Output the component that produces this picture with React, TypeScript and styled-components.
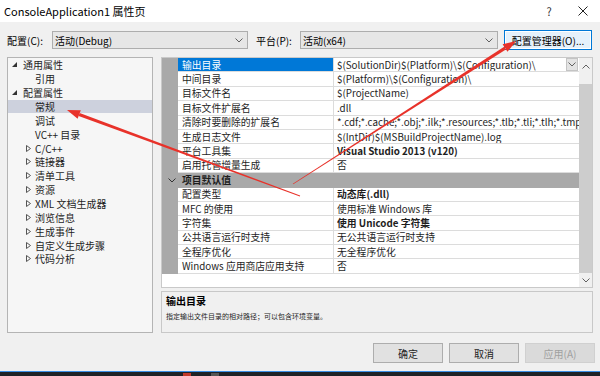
import React from 'react'
import styled, { createGlobalStyle } from 'styled-components'

const GlobalStyle = createGlobalStyle`
  html, body {
    margin: 0;
    padding: 0;
  }
  body {
    font-family: "Noto Sans CJK SC", "Noto Sans", sans-serif;
    color: #000;
  }
`

const Window = styled.div`
  position: relative;
  width: 600px;
  height: 376px;
  background: #f0f0f0;
  display: flex;
  flex-direction: column;
  overflow: hidden;
`

const TitleBar = styled.div`
  height: 22px;
  background: #fff;
  display: flex;
  align-items: center;
  padding-left: 4px;
  font-size: 11px;
`

const TitleText = styled.div`
  flex: 1;
`

const TitleButton = styled.div`
  width: 34px;
  display: flex;
  align-items: center;
  justify-content: center;
  font-size: 11px;
  color: #333;
`

const Body = styled.div`
  padding: 0 7px;
  display: flex;
  flex-direction: column;
`

const ConfigRow = styled.div`
  margin-top: 8px;
  height: 20px;
  display: flex;
  align-items: center;
  font-size: 10px;
`

const Label = styled.div<{ $w: number; $ml?: number }>`
  width: ${(p) => p.$w}px;
  margin-left: ${(p) => p.$ml || 0}px;
`

const Select = styled.div<{ $w: number }>`
  box-sizing: border-box;
  width: ${(p) => p.$w}px;
  height: 18px;
  background: #e6e6e6;
  border: 1px solid #adadad;
  display: flex;
  align-items: center;
  justify-content: space-between;
  padding: 0 4px 0 2px;
`

const ManagerButton = styled.div`
  box-sizing: border-box;
  margin-left: 6px;
  width: 88px;
  height: 20px;
  background: #e5f1fb;
  border: 1px solid #0078d7;
  box-shadow: inset 0 0 0 1px #fff;
  display: flex;
  align-items: center;
  justify-content: center;
`

const Main = styled.div`
  margin-top: 7px;
  height: 276px;
  display: flex;
`

const Tree = styled.div`
  box-sizing: border-box;
  width: 146px;
  background: #f6f6f6;
  border: 1px solid #b4b4b4;
  font-size: 10px;
  color: #1e1e1e;
`

const TreeItem = styled.div<{ $level: number; $selected?: boolean }>`
  height: 13.87px;
  display: flex;
  align-items: center;
  padding-left: ${(p) => (p.$level === 0 ? 4 : 18)}px;
  background: ${(p) => (p.$selected ? '#cdd1dd' : 'transparent')};
  white-space: nowrap;
`

const Expander = styled.div<{ $level: number }>`
  width: ${(p) => (p.$level === 0 ? 11 : 9)}px;
  display: flex;
  align-items: center;
`

const RightCol = styled.div`
  margin-left: 8px;
  width: 432px;
  display: flex;
  flex-direction: column;
`

const Grid = styled.div`
  box-sizing: border-box;
  height: 231px;
  background: #fff;
  border: 1px solid #c9c9c9;
  display: flex;
  font-size: 9.8px;
`

const Rows = styled.div`
  flex: 1;
  display: flex;
  flex-direction: column;
  overflow: hidden;
`

const Row = styled.div`
  height: 14.4px;
  display: flex;
  flex-shrink: 0;
`

const MarginCell = styled.div`
  width: 16px;
  background: #a9a9a9;
  flex-shrink: 0;
`

const NameCell = styled.div<{ $selected?: boolean }>`
  box-sizing: border-box;
  width: 156px;
  padding-left: 4px;
  display: flex;
  align-items: center;
  background: ${(p) => (p.$selected ? '#0078d7' : '#fff')};
  color: ${(p) => (p.$selected ? '#fff' : '#1e1e1e')};
  border-right: 1px solid #dcdcdc;
  border-bottom: 1px solid #dcdcdc;
  white-space: nowrap;
`

const ValueCell = styled.div<{ $bold?: boolean }>`
  box-sizing: border-box;
  flex: 1;
  min-width: 0;
  padding-left: 3px;
  display: flex;
  align-items: center;
  border-bottom: 1px solid #dcdcdc;
  font-weight: ${(p) => (p.$bold ? 700 : 400)};
  color: #1e1e1e;
  white-space: nowrap;
  overflow: hidden;
`

const ValueText = styled.span`
  flex: 1;
  overflow: hidden;
`

const DropButton = styled.div`
  box-sizing: border-box;
  width: 12px;
  height: 13px;
  margin-right: 1px;
  background: #e3e3e3;
  border: 1px solid #c4c4c4;
  display: flex;
  align-items: center;
  justify-content: center;
  flex-shrink: 0;
`

const SectionRow = styled.div`
  height: 14.4px;
  display: flex;
  align-items: center;
  background: #a9a9a9;
  font-weight: 700;
  color: #1e1e1e;
  flex-shrink: 0;
`

const SectionToggle = styled.div`
  width: 20px;
  display: flex;
  justify-content: center;
`

const Scrollbar = styled.div`
  width: 13px;
  background: #f0f0f0;
  display: flex;
  flex-direction: column;
`

const ScrollArrow = styled.div<{ $h: number }>`
  height: ${(p) => p.$h}px;
  display: flex;
  align-items: center;
  justify-content: center;
`

const ScrollGap = styled.div`
  height: 9px;
`

const Thumb = styled.div`
  flex: 1;
  background: #cdcdcd;
`

const Description = styled.div`
  box-sizing: border-box;
  margin-top: 3px;
  height: 42px;
  border: 1px solid #c8c8c8;
  padding: 2px 4px;
`

const DescTitle = styled.div`
  font-size: 10px;
  font-weight: 700;
  line-height: 14px;
`

const DescText = styled.div`
  font-size: 7px;
  line-height: 16px;
  color: #1e1e1e;
`

const ButtonRow = styled.div`
  margin-top: 10px;
  height: 20px;
  display: flex;
  justify-content: flex-end;
  gap: 6px;
  padding-right: 5px;
  margin-right: -7px;
`

const DialogButton = styled.div<{ $disabled?: boolean }>`
  box-sizing: border-box;
  width: 70px;
  height: 20px;
  background: ${(p) => (p.$disabled ? '#dadada' : '#e1e1e1')};
  border: 1px solid ${(p) => (p.$disabled ? '#d0d0d0' : '#adadad')};
  color: ${(p) => (p.$disabled ? '#a0a0a0' : '#1e1e1e')};
  font-size: 10px;
  display: flex;
  align-items: center;
  justify-content: center;
`

const Taskbar = styled.div`
  margin-top: auto;
  height: 4px;
  border-top: 1px solid #3a8ee6;
  background: #1f2226;
  display: flex;
  align-items: flex-end;
  padding-left: 183px;
  gap: 20px;
`

const TaskIcon = styled.div<{ $c: string }>`
  width: 8px;
  height: 3px;
  background: ${(p) => p.$c};
`

const Overlay = styled.svg`
  position: absolute;
  left: 0;
  top: 0;
  pointer-events: none;
`

const Chevron = ({ up, color = '#606060' }: { up?: boolean; color?: string }) => (
  <svg width="8" height="5" viewBox="0 0 8 5">
    <polyline
      points={up ? '0.5,4.5 4,1 7.5,4.5' : '0.5,0.5 4,4 7.5,0.5'}
      fill="none"
      stroke={color}
      strokeWidth="1"
    />
  </svg>
)

const OpenTriangle = () => (
  <svg width="5" height="5" viewBox="0 0 5 5">
    <polygon points="5,0 5,5 0,5" fill="#333" />
  </svg>
)

const ClosedTriangle = () => (
  <svg width="5" height="7" viewBox="0 0 5 7">
    <polygon points="0.5,0.5 4.5,3.5 0.5,6.5" fill="none" stroke="#555" strokeWidth="1" />
  </svg>
)

const CloseIcon = () => (
  <svg width="10" height="10" viewBox="0 0 10 10">
    <path d="M0.5 0.5 L9.5 9.5 M9.5 0.5 L0.5 9.5" stroke="#222" strokeWidth="1" />
  </svg>
)

type TreeNode = { label: string; level: number; expand?: 'open' | 'closed'; selected?: boolean }

const treeNodes: TreeNode[] = [
  { label: '通用属性', level: 0, expand: 'open' },
  { label: '引用', level: 1 },
  { label: '配置属性', level: 0, expand: 'open' },
  { label: '常规', level: 1, selected: true },
  { label: '调试', level: 1 },
  { label: 'VC++ 目录', level: 1 },
  { label: 'C/C++', level: 1, expand: 'closed' },
  { label: '链接器', level: 1, expand: 'closed' },
  { label: '清单工具', level: 1, expand: 'closed' },
  { label: '资源', level: 1, expand: 'closed' },
  { label: 'XML 文档生成器', level: 1, expand: 'closed' },
  { label: '浏览信息', level: 1, expand: 'closed' },
  { label: '生成事件', level: 1, expand: 'closed' },
  { label: '自定义生成步骤', level: 1, expand: 'closed' },
  { label: '代码分析', level: 1, expand: 'closed' },
]

type Prop = { name: string; value: string; bold?: boolean; selected?: boolean }

const generalProps: Prop[] = [
  { name: '输出目录', value: '$(SolutionDir)$(Platform)\\$(Configuration)\\', selected: true },
  { name: '中间目录', value: '$(Platform)\\$(Configuration)\\' },
  { name: '目标文件名', value: '$(ProjectName)' },
  { name: '目标文件扩展名', value: '.dll' },
  { name: '清除时要删除的扩展名', value: '*.cdf;*.cache;*.obj;*.ilk;*.resources;*.tlb;*.tli;*.tlh;*.tmp' },
  { name: '生成日志文件', value: '$(IntDir)$(MSBuildProjectName).log' },
  { name: '平台工具集', value: 'Visual Studio 2013 (v120)', bold: true },
  { name: '启用托管增量生成', value: '否' },
]

const defaultProps: Prop[] = [
  { name: '配置类型', value: '动态库(.dll)', bold: true },
  { name: 'MFC 的使用', value: '使用标准 Windows 库' },
  { name: '字符集', value: '使用 Unicode 字符集', bold: true },
  { name: '公共语言运行时支持', value: '无公共语言运行时支持' },
  { name: '全程序优化', value: '无全程序优化' },
  { name: 'Windows 应用商店应用支持', value: '否' },
]

const PropRow = ({ p }: { p: Prop }) => (
  <Row>
    <MarginCell />
    <NameCell $selected={p.selected}>{p.name}</NameCell>
    <ValueCell $bold={p.bold}>
      <ValueText>{p.value}</ValueText>
      {p.selected && (
        <DropButton>
          <Chevron />
        </DropButton>
      )}
    </ValueCell>
  </Row>
)

// tapered red annotation arrow, tail -> tip
const Arrow = ({ from, to }: { from: [number, number]; to: [number, number] }) => {
  const [x1, y1] = from
  const [x2, y2] = to
  const len = Math.hypot(x2 - x1, y2 - y1)
  const ux = (x2 - x1) / len
  const uy = (y2 - y1) / len
  const nx = -uy
  const ny = ux
  const headLen = 13
  const headW = 9
  const tailW = 0.8
  const neckW = 3.2
  const mx = x2 - ux * headLen
  const my = y2 - uy * headLen
  const pt = (x: number, y: number) => `${x.toFixed(1)},${y.toFixed(1)}`
  const shaft = [
    pt(x1 + (nx * tailW) / 2, y1 + (ny * tailW) / 2),
    pt(mx + (nx * neckW) / 2, my + (ny * neckW) / 2),
    pt(mx - (nx * neckW) / 2, my - (ny * neckW) / 2),
    pt(x1 - (nx * tailW) / 2, y1 - (ny * tailW) / 2),
  ].join(' ')
  const head = [
    pt(x2, y2),
    pt(mx + (nx * headW) / 2, my + (ny * headW) / 2),
    pt(mx - (nx * headW) / 2, my - (ny * headW) / 2),
  ].join(' ')
  return (
    <g fill="#e8322a">
      <polygon points={shaft} />
      <polygon points={head} />
    </g>
  )
}

const App = () => {
  return (
    <Window>
      <GlobalStyle />
      <TitleBar>
        <TitleText>ConsoleApplication1 属性页</TitleText>
        <TitleButton>?</TitleButton>
        <TitleButton>
          <CloseIcon />
        </TitleButton>
      </TitleBar>
      <Body>
        <ConfigRow>
          <Label $w={45}>配置(C):</Label>
          <Select $w={196}>
            <span>活动(Debug)</span>
            <Chevron />
          </Select>
          <Label $w={44} $ml={8}>平台(P):</Label>
          <Select $w={198}>
            <span>活动(x64)</span>
            <Chevron />
          </Select>
          <ManagerButton>配置管理器(O)...</ManagerButton>
        </ConfigRow>
        <Main>
          <Tree>
            {treeNodes.map((n) => (
              <TreeItem key={n.label} $level={n.level} $selected={n.selected}>
                <Expander $level={n.level}>
                  {n.expand === 'open' && <OpenTriangle />}
                  {n.expand === 'closed' && <ClosedTriangle />}
                </Expander>
                {n.label}
              </TreeItem>
            ))}
          </Tree>
          <RightCol>
            <Grid>
              <Rows>
                {generalProps.map((p) => (
                  <PropRow key={p.name} p={p} />
                ))}
                <SectionRow>
                  <SectionToggle>
                    <Chevron color="#333" />
                  </SectionToggle>
                  项目默认值
                </SectionRow>
                {defaultProps.map((p) => (
                  <PropRow key={p.name} p={p} />
                ))}
              </Rows>
              <Scrollbar>
                <ScrollArrow $h={17}>
                  <Chevron up />
                </ScrollArrow>
                <ScrollGap />
                <Thumb />
                <ScrollArrow $h={14}>
                  <Chevron />
                </ScrollArrow>
              </Scrollbar>
            </Grid>
            <Description>
              <DescTitle>输出目录</DescTitle>
              <DescText>指定输出文件目录的相对路径；可以包含环境变量。</DescText>
            </Description>
          </RightCol>
        </Main>
        <ButtonRow>
          <DialogButton>确定</DialogButton>
          <DialogButton>取消</DialogButton>
          <DialogButton $disabled>应用(A)</DialogButton>
        </ButtonRow>
      </Body>
      <Taskbar>
        <TaskIcon $c="#c0392b" />
        <TaskIcon $c="#555" />
      </Taskbar>
      <Overlay width="600" height="376" viewBox="0 0 600 376">
        <Arrow from={[293, 184]} to={[516, 41]} />
        <Arrow from={[300, 196]} to={[67, 110]} />
      </Overlay>
    </Window>
  )
}

export default App
